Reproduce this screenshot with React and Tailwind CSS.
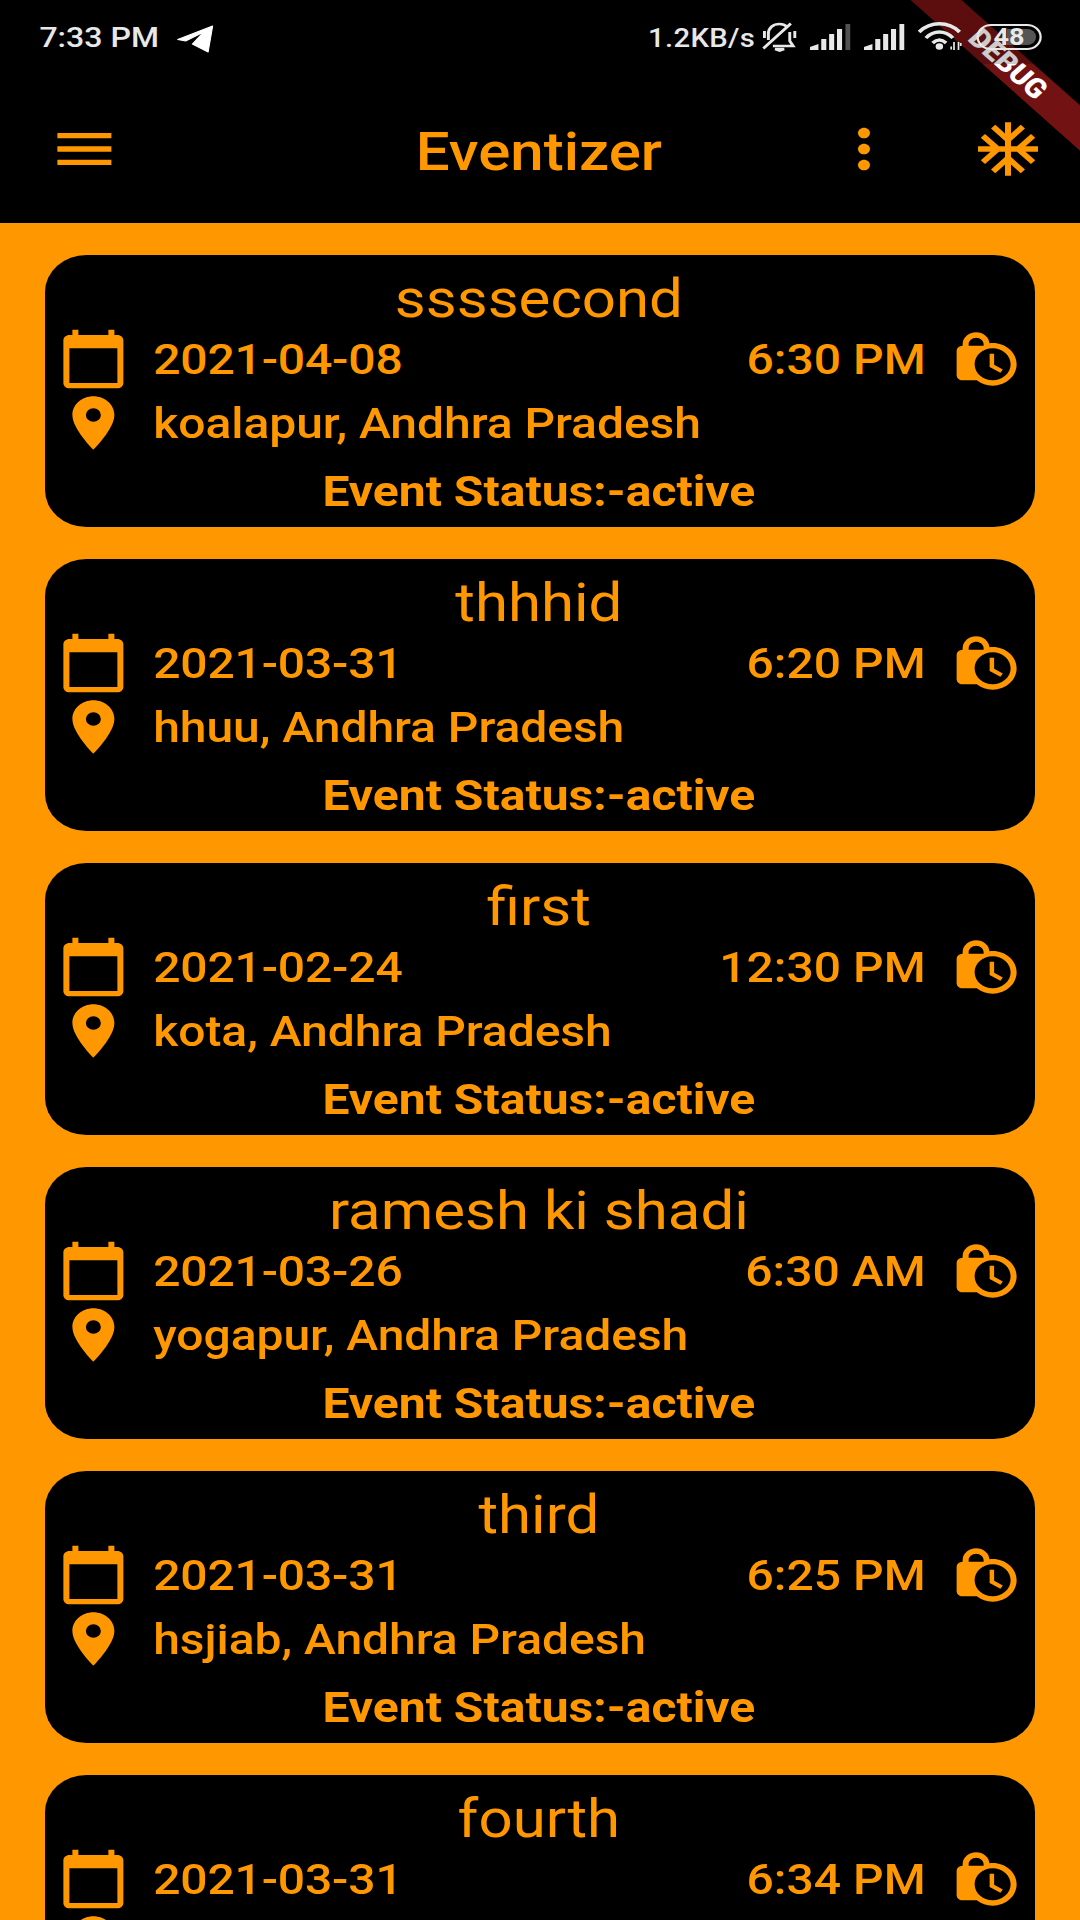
import React from 'react';
import { MdAcUnit, MdMenu, MdMoreVert, MdPlace } from 'react-icons/md';

const events = [
  { id: 1, title: 'ssssecond', date: '2021-04-08', time: '6:30 PM', place: 'koalapur, Andhra Pradesh', status: 'active' },
  { id: 2, title: 'thhhid', date: '2021-03-31', time: '6:20 PM', place: 'hhuu, Andhra Pradesh', status: 'active' },
  { id: 3, title: 'first', date: '2021-02-24', time: '12:30 PM', place: 'kota, Andhra Pradesh', status: 'active' },
  { id: 4, title: 'ramesh ki shadi', date: '2021-03-26', time: '6:30 AM', place: 'yogapur, Andhra Pradesh', status: 'active' },
  { id: 5, title: 'third', date: '2021-03-31', time: '6:25 PM', place: 'hsjiab, Andhra Pradesh', status: 'active' },
  // only the top of this one fits on the screen
  { id: 6, title: 'fourth', date: '2021-03-31', time: '6:34 PM' },
];

function CalendarIcon() {
  return (
    <svg viewBox="0 0 24 24" className="size-16 shrink-0" fill="currentColor">
      <path d="M20 3h-1V1h-2v2H7V1H5v2H4c-1.1 0-2 .9-2 2v16c0 1.1.9 2 2 2h16c1.1 0 2-.9 2-2V5c0-1.1-.9-2-2-2zm0 18H4V8h16v13z" />
    </svg>
  );
}

function LockClockIcon() {
  return (
    <svg viewBox="0 0 24 24" className="size-16 shrink-0" fill="currentColor">
      <path d="M14.5 14.2l2.9 1.7-.8 1.3L13 15v-5h1.5v4.2zM22 14c0 4.41-3.59 8-8 8-2.02 0-3.86-.76-5.27-2H4c-1.15 0-2-.85-2-2V9c0-1.12.89-1.96 2-2v-.5C4 4.01 6.01 2 8.5 2c2.34 0 4.24 1.79 4.46 4.08.35-.05.69-.08 1.04-.08 4.41 0 8 3.59 8 8zM6 7h5v-.5C11 5.12 9.88 4 8.5 4S6 5.12 6 6.5V7zm14 7c0-3.31-2.69-6-6-6s-6 2.69-6 6 2.69 6 6 6 6-2.69 6-6z" />
    </svg>
  );
}

function SignalIcon({ weak }) {
  return (
    <svg viewBox="0 0 36 26" className="h-[26px] w-9 shrink-0" fill="currentColor">
      <path d="M0 26v-3l7.500-3v6z" />
      <rect x="10" y="15" width="4.500" height="11" />
      <rect x="17" y="10" width="4.500" height="16" />
      <rect x="24" y="5" width="4.500" height="21" />
      <rect x="31.500" y="0" width="4.500" height="26" opacity={weak ? 0.35 : 1} />
    </svg>
  );
}

function MutedBellIcon() {
  return (
    <svg viewBox="0 0 32 30" className="h-[30px] w-8 shrink-0" fill="none" stroke="currentColor" strokeWidth="2.600">
      <path d="M6 18V12c0-6 4-10 10-10 3 0 5 1 7 3M25 10v9l3 5H10M1.500 26.500L26 1.500M2.500 9v7M29.500 9v7" />
      <path d="M12 27h8l-4 1.500z" fill="currentColor" />
    </svg>
  );
}

function WifiIcon() {
  return (
    <svg viewBox="0 0 40 31" className="h-[31px] w-10 shrink-0" fill="none" stroke="currentColor" strokeWidth="3.400">
      <path d="M1 11C11 0 27 0 37 11M7 17c7-8 17-8 24 0M13 22c4-4 8-4 12 0" />
      <circle cx="19" cy="25.500" r="3.300" fill="currentColor" stroke="none" />
      <path d="M32 21v8M29.500 25.500v3M36 21v8M38 22v3" strokeWidth="1.500" />
    </svg>
  );
}

function Battery() {
  return (
    <div className="relative flex h-[26px] w-[58px] shrink-0 items-center justify-center rounded-full border-2 border-[#e8e8e8]">
      <div className="absolute top-[3px] right-[3px] h-4 w-[26px] rounded-r-full bg-[#555]" />
      <span className="relative text-[24px] leading-none font-bold">48</span>
    </div>
  );
}

function StatusBar() {
  return (
    <div className="relative z-10 flex h-[73px] items-center pr-[34px] pl-[35px] text-[#e8e8e8]">
      <span className="w-[122px] pt-1 text-[28.500px] font-medium">7:33 PM</span>
      <svg viewBox="0 0 33 28" className="mt-1 h-7 w-[33px]" fill="white" stroke="white" strokeLinejoin="round">
        <path d="M1 14.500L32 1l-4 26-14-8 10-12L8 16z" />
      </svg>
      <span className="ml-auto w-[101px] pt-[3px] text-[26px] font-medium tracking-[0.300px] whitespace-nowrap">1.2KB/s</span>
      <MutedBellIcon />
      <div className="ml-[11px] flex items-center gap-3">
        <SignalIcon weak />
        <SignalIcon />
        <WifiIcon />
        <Battery />
      </div>
    </div>
  );
}

function DebugBanner() {
  return (
    <div className="absolute top-0 right-0 size-[200px] overflow-hidden">
      <div className="absolute top-12 right-[-86px] flex h-8 w-[300px] rotate-45 items-center justify-center bg-[#731212] text-[27px] leading-none font-black text-white">
        DEBUG
      </div>
    </div>
  );
}

function AppBar() {
  return (
    <div className="grid h-[151px] grid-cols-[1fr_auto_1fr] items-center px-8 text-[#ff9800]">
      <MdMenu className="ml-[10.700px] size-16" />
      <h1 className="-ml-0.5 pt-2 text-[53.300px] font-medium">Eventizer</h1>
      <div className="flex items-center justify-end gap-16">
        <MdMoreVert className="size-16" />
        <MdAcUnit className="size-16" />
      </div>
    </div>
  );
}

function EventCard({ event }) {
  return (
    <div className="h-[272px] shrink-0 rounded-[37px] bg-black px-[10.700px] text-[42.700px] font-medium text-[#ff9800]">
      <h2 className="flex h-[72px] items-center justify-center pt-[18px] pr-0.5 text-[53.300px] leading-none font-normal">
        {event.title}
      </h2>
      <div className="flex h-16 items-center">
        <CalendarIcon />
        <span className="ml-[21.500px] tracking-[-0.150px]">{event.date}</span>
        <span className="mr-[22.500px] ml-auto">{event.time}</span>
        <LockClockIcon />
      </div>
      <div className="flex h-16 items-center">
        <MdPlace className="size-16 shrink-0" />
        {event.place && <span className="ml-[21.500px] tracking-[-0.050px]">{event.place}</span>}
      </div>
      {event.status && (
        <div className="flex h-[72px] items-center justify-center pr-0.5 font-bold">
          Event Status:-{event.status}
        </div>
      )}
    </div>
  );
}

export default function App() {
  return (
    <div className="h-[1920px] w-[1080px] overflow-hidden bg-[#ff9800]">
      {/* 360x720dp phone screen, stretched to the full width */}
      <div className="relative flex h-[1920px] w-[960px] origin-top-left scale-x-[1.125] flex-col overflow-hidden font-['Roboto','Noto_Sans',sans-serif]">
        <header className="relative h-[223px] shrink-0 bg-black">
          <DebugBanner />
          {/* status bar scrim */}
          <div className="absolute inset-x-0 top-0 h-16 bg-black/20" />
          <StatusBar />
          <AppBar />
        </header>
        <main className="flex flex-col gap-8 px-10 pt-8">
          {events.map(event => (
            <EventCard key={event.id} event={event} />
          ))}
        </main>
      </div>
    </div>
  );
}
